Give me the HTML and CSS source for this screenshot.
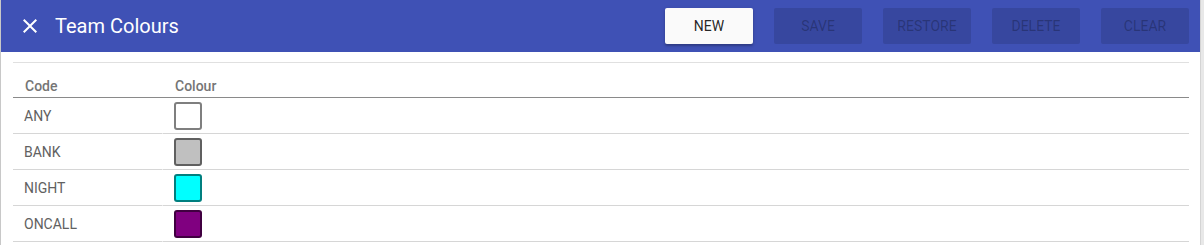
FILE: index.html
```html
<!DOCTYPE html>
<html lang="en">
<head>
    <meta charset="UTF-8">
    <meta name="viewport" content="width=device-width, initial-scale=1.0">
    <title>Team Colours</title>
    <link rel="stylesheet" href="styles.css">
</head>
<body>
<div class="page">
    <div class="toolbar">
        <svg class="close" width="24" height="24" viewBox="0 0 24 24"><path fill="#fff" d="M19 6.41L17.59 5 12 10.59 6.41 5 5 6.41 10.59 12 5 17.59 6.41 19 12 13.41 17.59 19 19 17.59 13.41 12z"/></svg>
        <span class="title">Team Colours</span>
        <span class="spacer"></span>
        <button class="btn primary">NEW</button>
        <button class="btn" disabled>SAVE</button>
        <button class="btn" disabled>RESTORE</button>
        <button class="btn" disabled>DELETE</button>
        <button class="btn" disabled>CLEAR</button>
    </div>

    <div class="content">
        <table class="grid">
            <thead>
                <tr><th class="code">Code</th><th>Colour</th></tr>
            </thead>
            <tbody>
                <tr><td class="code">ANY</td><td><span class="swatch" style="background:#ffffff"></span></td></tr>
                <tr><td class="code">BANK</td><td><span class="swatch" style="background:#c0c0c0"></span></td></tr>
                <tr><td class="code">NIGHT</td><td><span class="swatch" style="background:#00ffff"></span></td></tr>
                <tr><td class="code">ONCALL</td><td><span class="swatch" style="background:#800080"></span></td></tr>
            </tbody>
        </table>
    </div>
</div>
</body>
</html>
```

FILE: styles.css
```css
body { margin: 0; background: #e8e8e8; font-family: Roboto, "Liberation Sans", sans-serif; }
.page { width: 1199px; height: 245px; background: #fff; border-left: 1px solid #c8c8c8; border-right: 1px solid #d4d4d4; overflow: hidden; }

.toolbar { height: 52px; background: #3f51b5; display: flex; align-items: center; padding: 0 11px 0 17px; }
.close { margin-right: 13px; }
.title { color: #fff; font-size: 20px; }
.spacer { flex: 1; }
.btn { width: 88px; height: 36px; margin-left: 21px; border: none; border-radius: 2px; font-family: inherit; font-size: 14px; background: rgba(0,0,0,0.12); color: rgba(0,0,0,0.26); padding: 0; }
.btn.primary { background: #fafafa; color: rgba(0,0,0,0.87); box-shadow: 0 2px 2px rgba(0,0,0,0.2), 0 1px 4px rgba(0,0,0,0.12); }

.content { padding: 10px 11px 0 12px; }
.grid { width: 100%; border-collapse: separate; border-spacing: 0; border-top: 1px solid #e0e0e0; font-size: 14px; }
.grid th { height: 31px; text-align: left; font-weight: 500; color: #757575; padding: 0 12px 3px; vertical-align: bottom; border-bottom: 1px solid #8a8a8a; }
.grid td { height: 35px; padding: 0 11px; color: #616161; border-bottom: 1px solid #d6d6d6; vertical-align: middle; }
.grid .code { width: 126px; }
.grid td.code { border-right: 1px solid #fff; }
.swatch { display: block; width: 24px; height: 24px; border: 2px solid rgba(0,0,0,0.5); border-radius: 3px; }
```
